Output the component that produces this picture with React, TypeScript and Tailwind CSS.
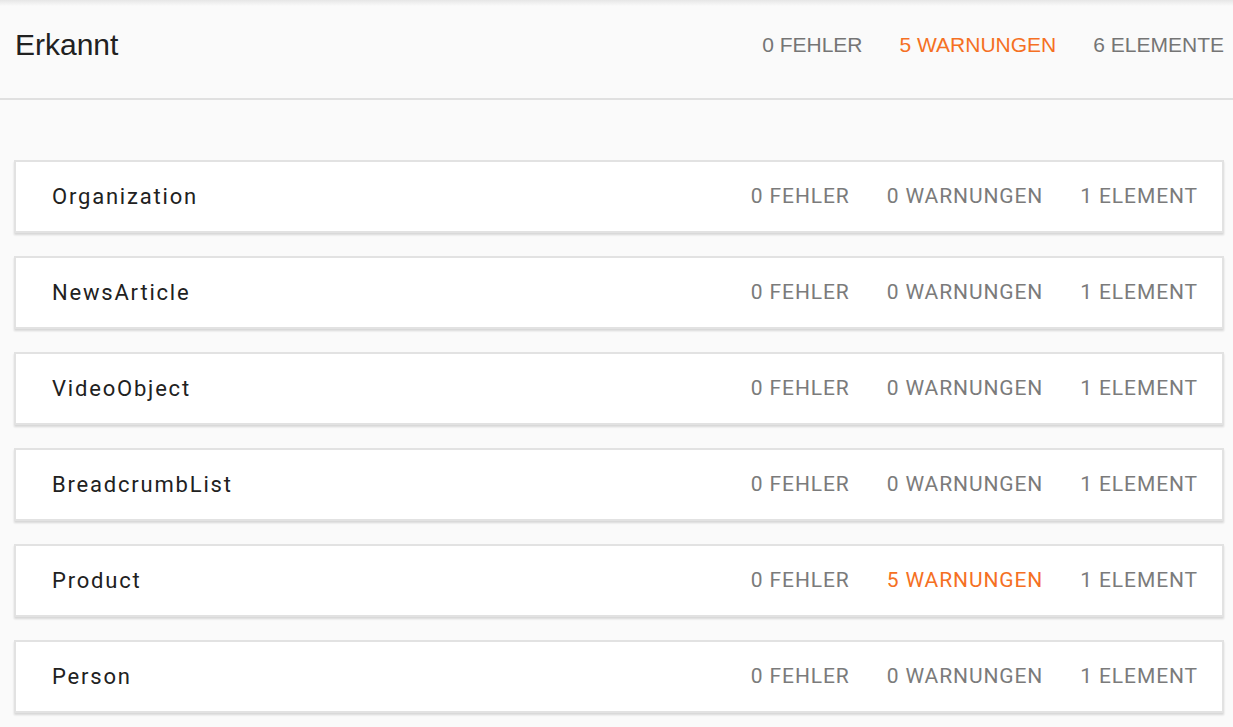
import React from 'react';

type Row = { name: string; errors: number; warnings: number; items: number };

const rows: Row[] = [
    { name: 'Organization', errors: 0, warnings: 0, items: 1 },
    { name: 'NewsArticle', errors: 0, warnings: 0, items: 1 },
    { name: 'VideoObject', errors: 0, warnings: 0, items: 1 },
    { name: 'BreadcrumbList', errors: 0, warnings: 0, items: 1 },
    { name: 'Product', errors: 0, warnings: 5, items: 1 },
    { name: 'Person', errors: 0, warnings: 0, items: 1 },
];

const App: React.FC = () => {
    return (
        <div className="min-h-screen bg-[#fafafa] overflow-hidden">
            <header className="relative h-[100px] flex items-center justify-between pl-[15px] pr-[9px] pb-[9px] border-b-2 border-[#e0e0e0] bg-[#fafafa]">
                <div className="absolute inset-x-0 top-0 h-[6px] bg-gradient-to-b from-[#e6e6e6] to-[#fafafa]" />
                <h1 className="text-[30px] leading-none text-[#212121] font-['Liberation_Sans',Arial,sans-serif]">Erkannt</h1>
                <div className="flex items-center gap-[37px] text-[21px] text-[#757575] font-['Liberation_Sans',Arial,sans-serif]">
                    <span>0 FEHLER</span>
                    <span className="text-[#f57023]">5 WARNUNGEN</span>
                    <span>6 ELEMENTE</span>
                </div>
            </header>
            <main className="flex flex-col gap-[23px] pt-[60px] ml-[14px] mr-[9px]">
                {rows.map((row, index) => (
                    <div
                        key={index}
                        className="h-[73px] flex items-center justify-between pl-[36px] pr-[24px] bg-white border-2 border-[#e2e2e2] shadow-[0_2px_2px_rgba(0,0,0,0.14)] font-['Roboto',sans-serif]"
                    >
                        <span className="text-[22px] tracking-[1.8px] text-[#212121]">{row.name}</span>
                        <div className="flex items-center gap-[37px] text-[21px] tracking-[0.9px] text-[#7b7b7b]">
                            <span>{row.errors} FEHLER</span>
                            <span className={row.warnings > 0 ? 'text-[#f57023]' : ''}>{row.warnings} WARNUNGEN</span>
                            <span>{row.items} ELEMENT</span>
                        </div>
                    </div>
                ))}
            </main>
        </div>
    );
};

export default App;
